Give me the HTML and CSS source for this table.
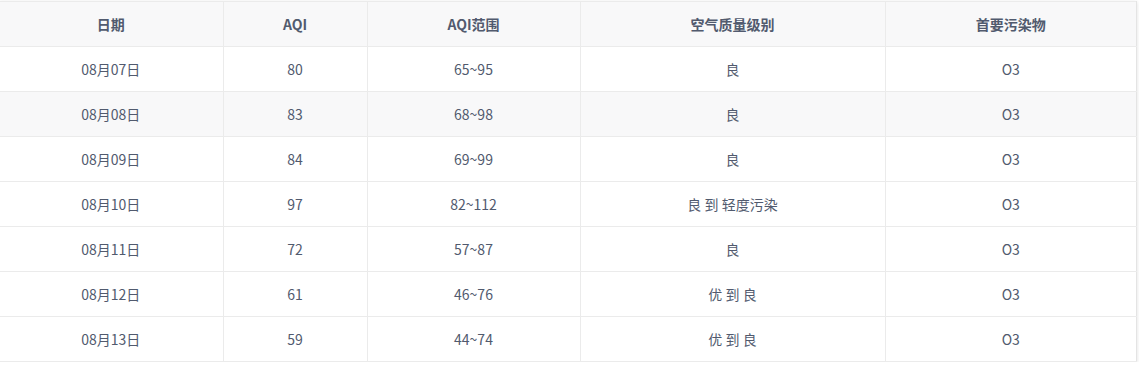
FILE: index.html
```html
<!DOCTYPE html>
<html lang="zh-CN">
<head>
    <meta charset="UTF-8">
    <title>空气质量预报</title>
    <link rel="stylesheet" href="styles.css">
</head>
<body>
    <div class="table-wrap">
        <table class="aqi-table">
            <colgroup>
                <col style="width: 224px;">
                <col style="width: 144px;">
                <col style="width: 213px;">
                <col style="width: 305px;">
                <col>
            </colgroup>
            <thead>
                <tr>
                    <th>日期</th>
                    <th>AQI</th>
                    <th>AQI范围</th>
                    <th>空气质量级别</th>
                    <th>首要污染物</th>
                </tr>
            </thead>
            <tbody>
                <tr><td>08月07日</td><td>80</td><td>65~95</td><td>良</td><td>O3</td></tr>
                <tr class="stripe"><td>08月08日</td><td>83</td><td>68~98</td><td>良</td><td>O3</td></tr>
                <tr><td>08月09日</td><td>84</td><td>69~99</td><td>良</td><td>O3</td></tr>
                <tr><td>08月10日</td><td>97</td><td>82~112</td><td>良 到 轻度污染</td><td>O3</td></tr>
                <tr><td>08月11日</td><td>72</td><td>57~87</td><td>良</td><td>O3</td></tr>
                <tr><td>08月12日</td><td>61</td><td>46~76</td><td>优 到 良</td><td>O3</td></tr>
                <tr><td>08月13日</td><td>59</td><td>44~74</td><td>优 到 良</td><td>O3</td></tr>
            </tbody>
        </table>
    </div>
</body>
</html>
```

FILE: styles.css
```css
body {
    margin: 0;
    padding-top: 1px;
    background-color: #fff;
    font-family: "Noto Sans CJK SC", "Open Sans", sans-serif;
}

.table-wrap {
    width: 1138px;
    margin-left: -1px;
    box-shadow: 0 1px 4px rgba(0, 0, 0, 0.12);
    background-color: #fff;
}

.aqi-table {
    width: 100%;
    border-collapse: collapse;
    table-layout: fixed;
    font-size: 14px;
    color: #515a6e;
}

.aqi-table th,
.aqi-table td {
    height: 44px;
    padding: 0;
    text-align: center;
    border: 1px solid #ebebeb;
    border-top: none;
}

.aqi-table th {
    background-color: #f8f8f9;
    font-weight: bold;
    border-top: 1px solid #ebebeb;
}

.aqi-table tr > :first-child {
    border-left: none;
}

.aqi-table tr > :last-child {
    border-right: 1px solid #e4e4e4;
}

.aqi-table tr.stripe td {
    background-color: #f8f8f9;
}
```
